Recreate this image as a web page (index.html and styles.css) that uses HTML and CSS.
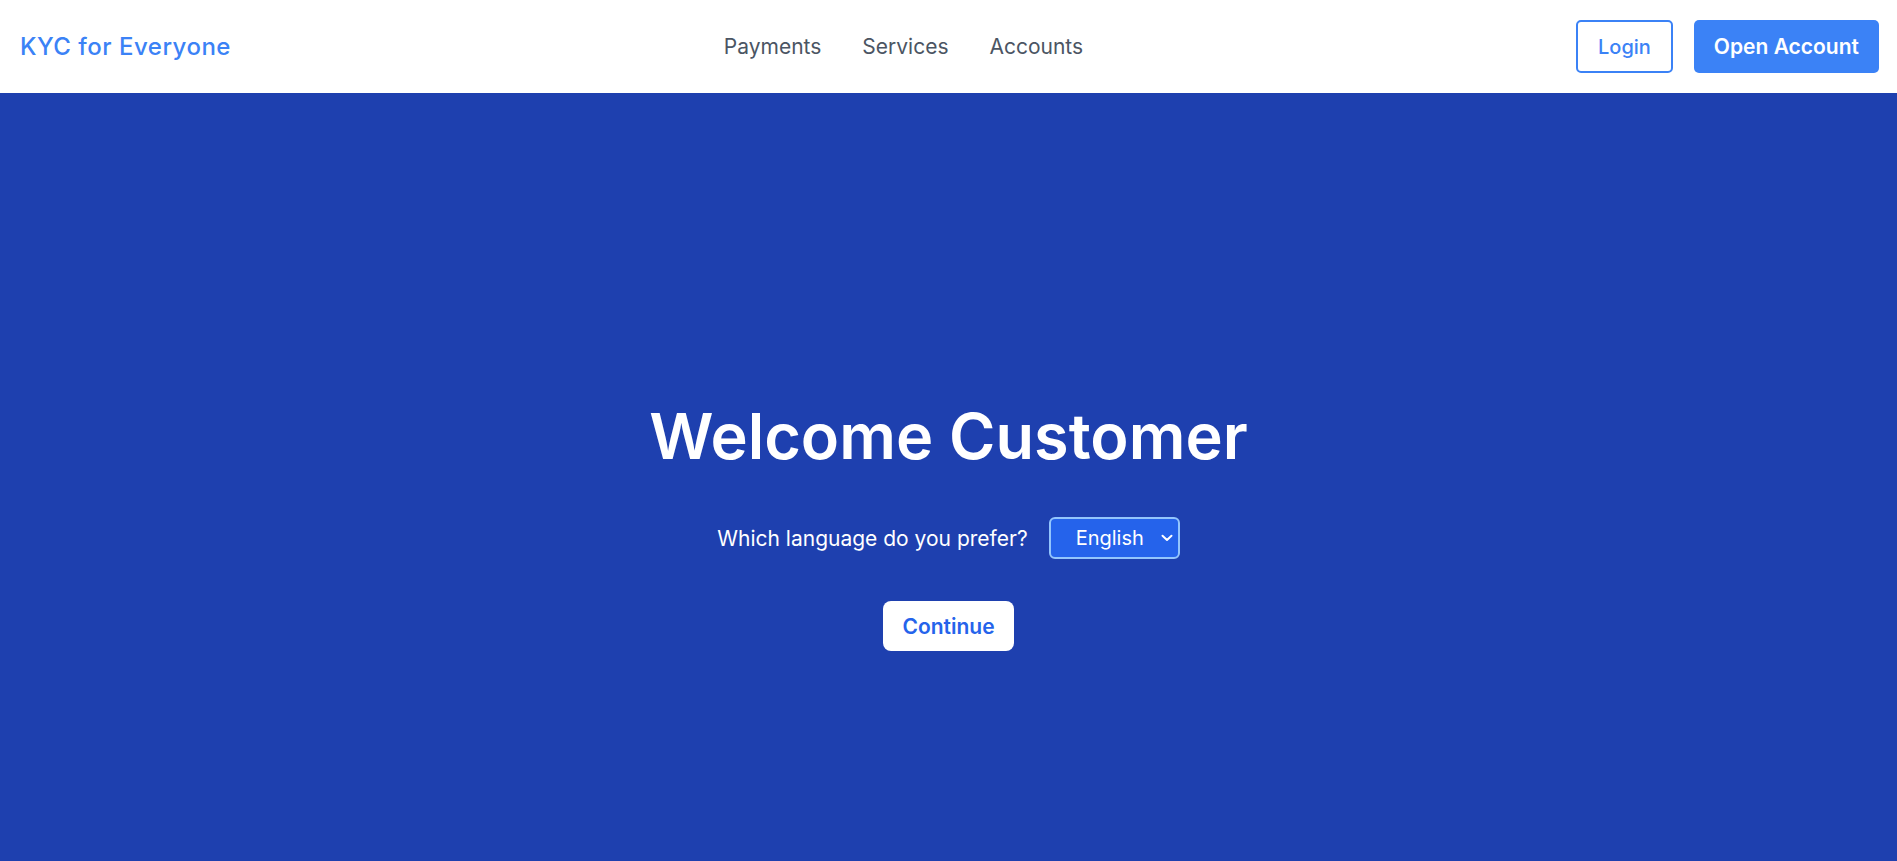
FILE: index.html
```html
<!DOCTYPE html>
<html lang="en">
<head>
<meta charset="utf-8">
<title>KYC for Everyone</title>
<link rel="stylesheet" href="styles.css">
</head>
<body>
<header class="topbar">
  <a class="brand" href="#">KYC for Everyone</a>
  <nav class="nav">
    <a href="#">Payments</a>
    <a href="#">Services</a>
    <a href="#">Accounts</a>
  </nav>
  <div class="actions">
    <button class="btn btn-outline">Login</button>
    <button class="btn btn-solid">Open Account</button>
  </div>
</header>
<main class="hero">
  <h1 class="title">Welcome Customer</h1>
  <div class="lang-row">
    <label class="lang-label" for="lang">Which language do you prefer?</label>
    <div class="select-wrap">
      <select id="lang" class="lang-select">
        <option>English</option>
        <option>Hindi</option>
      </select>
      <svg class="chevron" width="12" height="8" viewBox="0 0 12 8" aria-hidden="true">
        <path d="M1.5 1.8 L6 6 L10.5 1.8" fill="none" stroke="#ffffff" stroke-width="2" stroke-linecap="round" stroke-linejoin="round"/>
      </svg>
    </div>
  </div>
  <button class="continue">Continue</button>
</main>
</body>
</html>
```

FILE: styles.css
```css
* { box-sizing: border-box; }

html, body {
  margin: 0;
  padding: 0;
}

body {
  font-family: Inter, "Noto Sans", "Liberation Sans", sans-serif;
  background: #1e40af;
  overflow: hidden;
}

.topbar {
  height: 93px;
  background: #ffffff;
  display: flex;
  align-items: center;
  justify-content: space-between;
  padding: 0 18px 0 20px;
}

.brand {
  color: #3b82f6;
  font-size: 24px;
  font-weight: 500;
  letter-spacing: 0.5px;
  text-decoration: none;
}

.nav {
  display: flex;
  gap: 41px;
}

.nav a {
  color: #4b5563;
  font-size: 21px;
  text-decoration: none;
}

.actions {
  display: flex;
  gap: 21px;
}

.btn {
  height: 53px;
  padding: 0 20px;
  border-radius: 5px;
  font-family: inherit;
  cursor: pointer;
}

.btn-outline {
  background: #ffffff;
  border: 2px solid #3b82f6;
  color: #3b82f6;
  font-size: 20px;
  font-weight: 500;
}

.btn-solid {
  background: #3b82f6;
  border: none;
  color: #ffffff;
  font-size: 21px;
  font-weight: 600;
}

.hero {
  height: 768px;
  background: #1e40af;
  display: flex;
  flex-direction: column;
  align-items: center;
  padding-top: 307px;
}

.title {
  margin: 0;
  color: #ffffff;
  font-size: 63px;
  line-height: 72px;
  font-weight: 600;
}

.lang-row {
  margin-top: 45px;
  display: flex;
  align-items: center;
  gap: 21px;
}

.lang-label {
  color: #ffffff;
  font-size: 21px;
}

.select-wrap {
  position: relative;
}

.lang-select {
  appearance: none;
  -webkit-appearance: none;
  width: 131px;
  height: 42px;
  padding: 0 0 0 25px;
  background: #2563eb;
  color: #ffffff;
  border: 2px solid #93c5fd;
  border-radius: 6px;
  font-family: inherit;
  font-size: 20px;
  display: block;
}

.chevron {
  position: absolute;
  right: 7px;
  top: 17px;
  pointer-events: none;
}

.continue {
  margin-top: 42px;
  width: 131px;
  height: 50px;
  background: #ffffff;
  border: none;
  border-radius: 8px;
  color: #2563eb;
  font-family: inherit;
  font-size: 21px;
  font-weight: 600;
  cursor: pointer;
}
```
